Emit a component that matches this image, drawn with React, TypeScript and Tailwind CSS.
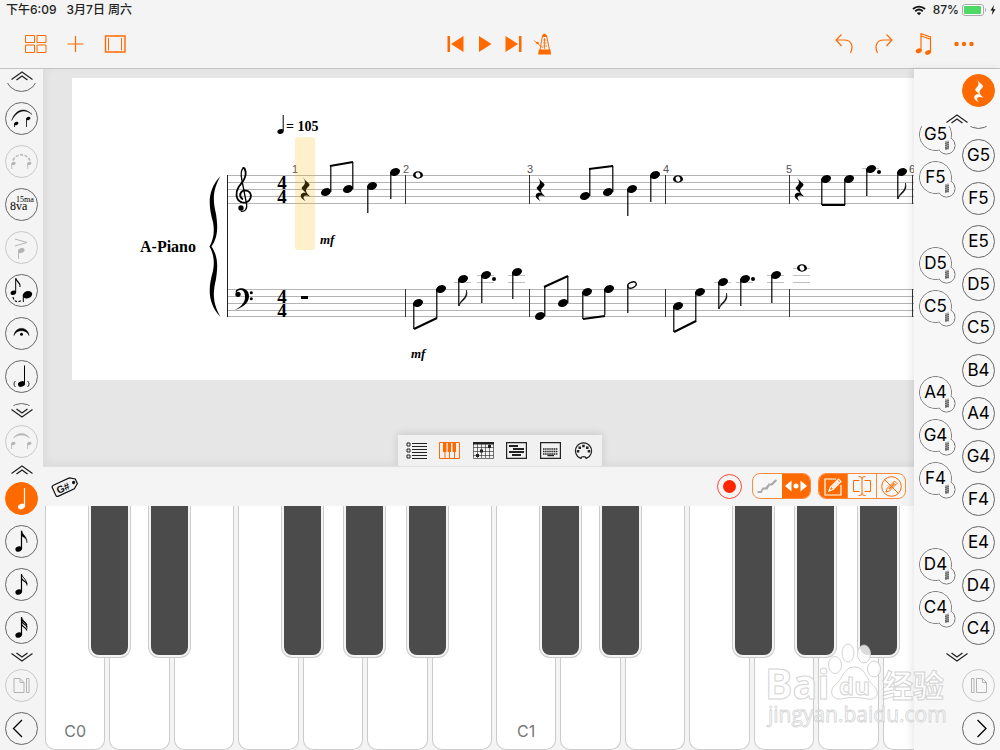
import type { ReactNode } from 'react';

const ORANGE = '#ff6a00';

interface NoteData {
    x: number;
    y: number;
    stem?: number;
    up?: boolean;
    flag?: boolean;
    dot?: [number, number];
    hollow?: boolean;
    ledgers?: number[];
}

const notes: NoteData[] = [
    // treble staff
    { x: 326, y: 192, stem: 166, up: true },
    { x: 348, y: 189, stem: 162, up: true },
    { x: 372, y: 186, stem: 213 },
    { x: 395, y: 172, stem: 199 },
    { x: 585, y: 196, stem: 169, up: true },
    { x: 608, y: 192, stem: 166, up: true },
    { x: 632, y: 189, stem: 216 },
    { x: 655, y: 175, stem: 202 },
    { x: 826, y: 179, stem: 205 },
    { x: 849, y: 179, stem: 205 },
    { x: 871, y: 169, stem: 196, dot: [879, 172], ledgers: [168] },
    { x: 902, y: 172, stem: 199, flag: true },
    // bass staff
    { x: 418, y: 303, stem: 329 },
    { x: 441, y: 289, stem: 318 },
    { x: 463, y: 279, stem: 306, flag: true, ledgers: [282] },
    { x: 486, y: 275, stem: 303, dot: [494, 279], ledgers: [275, 282] },
    { x: 517, y: 272, stem: 299, ledgers: [275, 282] },
    { x: 540, y: 316, stem: 287, up: true },
    { x: 563, y: 303, stem: 276, up: true },
    { x: 587, y: 292, stem: 319 },
    { x: 609, y: 289, stem: 315 },
    { x: 632, y: 285, stem: 313, hollow: true },
    { x: 678, y: 306, stem: 332 },
    { x: 700, y: 292, stem: 322 },
    { x: 723, y: 282, stem: 309, flag: true, ledgers: [282] },
    { x: 745, y: 279, stem: 306, dot: [753, 279], ledgers: [282] },
    { x: 776, y: 275, stem: 303, ledgers: [275, 282] },
];

const beams = [
    [330, 166, 353, 162], [589, 169, 613, 166], [822, 205, 845, 205],
    [414, 329, 437, 318], [544, 287, 568, 276], [583, 319, 605, 316], [674, 332, 696, 321],
];

const wholeNotes = [[418, 175], [678, 179], [802, 268]];

const REST = 'M-2-12C-1-9 4-6 4.500-4.500C5-3 1-1 1 1.500C1 4 4 6 5 7.500C1 5.500-1.500 6.500-1.500 8.500C-1.500 10 0 11 .5 12C-3 10-5 8-4 5.500C-3 3.500-.5 3.500 1 4C-1 2-3 0-3.500-1C-2-3 0-4.500 0-6.500C0-9-1.500-10.500-2-12Z';

const ScoreNote = ({ x, y, stem, up, flag, dot, hollow, ledgers }: NoteData) => {
    const sx = up ? x + 5 : x - 4;
    return (
        <g>
            {ledgers?.map(l => <rect key={l} x={x - 9} y={l} width="17" height="1" fill="#c0c0c0" />)}
            <ellipse
                cx={x} cy={y} rx={hollow ? 4.4 : 5.2} ry={hollow ? 2.8 : 3.7}
                transform={`rotate(-22 ${x} ${y})`}
                fill={hollow ? '#fff' : '#000'} stroke="#000" strokeWidth={hollow ? 1.3 : 0}
            />
            {stem && <path d={`M${sx - 0.2} ${y}V${stem}`} stroke="#000" strokeWidth="1.2" />}
            {flag && stem && (
                <path d={`M${sx} ${stem}C${sx + 1} ${stem - 7} ${sx + 8} ${stem - 7} ${sx + 7.5} ${stem - 16}C${sx + 10} ${stem - 7} ${sx + 2} ${stem - 6} ${sx} ${stem}Z`} stroke="#000" strokeWidth=".5" />
            )}
            {dot && <circle cx={dot[0]} cy={dot[1]} r="2" />}
        </g>
    );
};

const Brace = () => (
    <path d="M220.500 176C206 191 209 208 213 222C215 233 213 240 209.500 246.500C213 253 215 260 213 271C209 285 206 302 220.500 317C212 302 213 292 216 279C218 266 218 256 211.500 246.500C218 237 218 227 216 214C213 201 212 191 220.500 176Z" />
);

const TrebleClef = () => (
    <g transform="translate(130 110) scale(.3333)" fill="none" stroke="#000" strokeLinecap="round">
        <path d="M337 267C325 258 331 242 345 241C358 241 365 251 362 263C358 276 344 281 333 276" strokeWidth="5.500" />
        <path d="M333 276C318 269 315 249 326 231C336 217 349 206 347 188C346 179 343 174 340 174" strokeWidth="5.500" />
        <path d="M340 174C331 181 333 198 336 212L350 284C352 298 344 305 334 304" strokeWidth="4" />
        <circle cx="333" cy="294" r="8" fill="#000" stroke="none" />
    </g>
);

const BassClef = () => (
    <g transform="translate(130 110) scale(.3333)">
        <path d="M314 600C335 590 346 575 345 560C345 547 340 541 333 540C325 539 320 544 319 550C312 541 325 535 336 535C350 536 358 548 357 561C355 582 335 594 314 600Z" />
        <circle cx="324" cy="553" r="8" />
        <circle cx="364" cy="548" r="4.500" />
        <circle cx="364" cy="566" r="4.500" />
    </g>
);

const Score = () => (
    <svg width="842" height="302" viewBox="72 78 842 302" className="block shrink-0" role="img" aria-label="A-Piano score">
        {[175, 182, 189, 196, 203, 289, 296, 303, 310, 316].map(y => (
            <rect key={y} x="227" y={y} width="687" height="1" fill="#b4b4b4" />
        ))}
        <rect x="227" y="175" width="1" height="142" fill="#222" />
        {[405, 529, 665, 789, 912].map(x => (
            <g key={x} fill="#333">
                <rect x={x} y="175" width="1" height="29" />
                <rect x={x} y="289" width="1" height="28" />
            </g>
        ))}
        <Brace />
        <TrebleClef />
        <BassClef />
        <g fontFamily="'Liberation Serif', serif" fontWeight="bold">
            <text x="140" y="252" fontSize="16">A-Piano</text>
            <text x="286" y="131" fontSize="14">= 105</text>
            <g fontSize="19" textAnchor="middle">
                <text x="282" y="189">4</text>
                <text x="282" y="203">4</text>
                <text x="282" y="303">4</text>
                <text x="282" y="317">4</text>
            </g>
            <g fontSize="13" fontStyle="italic">
                <text x="320" y="244">mf</text>
                <text x="411" y="358">mf</text>
            </g>
        </g>
        <g fontFamily="'Liberation Sans', sans-serif" fontSize="11" fill="#555" textAnchor="middle">
            <text x="295" y="173">1</text>
            <text x="406" y="173">2</text>
            <text x="530" y="173">3</text>
            <text x="666" y="173">4</text>
            <text x="789" y="173">5</text>
            <text x="912" y="173">6</text>
        </g>
        <ellipse cx="280.500" cy="131.500" rx="3.200" ry="2.300" transform="rotate(-20 280.500 131.500)" />
        <path d="M283.200 131V115" stroke="#000" />
        <path d={REST} transform="translate(305 189)" />
        <path d={REST} transform="translate(540 189)" />
        <path d={REST} transform="translate(799 189)" />
        <rect x="301" y="296" width="7" height="3" />
        {wholeNotes.map(([x, y]) => (
            <g key={x}>
                {x === 802 && [268, 275, 282].map(l => <rect key={l} x="793" y={l} width="17" height="1" fill="#c0c0c0" />)}
                <ellipse cx={x} cy={y} rx="5" ry="3.700" />
                <ellipse cx={x} cy={y} rx="2.300" ry="2.700" transform={`rotate(-20 ${x} ${y})`} fill="#fff" />
            </g>
        ))}
        {notes.map(n => <ScoreNote key={`${n.x}-${n.y}`} {...n} />)}
        {beams.map(([x1, y1, x2, y2]) => (
            <path key={x1} d={`M${x1} ${y1}L${x2} ${y2}`} stroke="#000" strokeWidth="2" />
        ))}
        <rect x="295" y="137" width="20" height="113" rx="3" fill="#ffb400" fillOpacity=".2" />
    </svg>
);

const DoubleChevron = ({ down }: { down?: boolean }) => (
    <svg width="22" height="10" viewBox="0 0 22 10" fill="none" stroke="#222" className={down ? 'rotate-180' : ''}>
        <path d="M.5 8.500L11 1L21.500 8.500" strokeWidth="1.200" />
        <path d="M5.500 9L11 5L16.500 9" strokeWidth="1.400" />
    </svg>
);

interface RoundProps {
    label: string;
    dim?: boolean;
    active?: boolean;
    children?: ReactNode;
}

const RoundButton = ({ label, dim, active, children }: RoundProps) => (
    <button
        type="button"
        aria-label={label}
        className={`size-[33px] shrink-0 rounded-full border ${active ? 'border-[#ff6a00] bg-[#ff6a00] text-white' : dim ? 'border-[#c8c8c8] text-[#b4b4b4]' : 'border-[#666] text-black'}`}
    >
        <svg viewBox="0 0 33 33" className="-m-px size-[33px] max-w-none" fill="none" stroke="currentColor">{children}</svg>
    </button>
);

const Head = ({ x, y, r = 2.2 }: { x: number; y: number; r?: number }) => (
    <ellipse cx={x} cy={y} rx={r} ry={r * 0.75} transform={`rotate(-20 ${x} ${y})`} fill="currentColor" stroke="none" />
);

const FlagNote = ({ flags }: { flags: number }) => (
    <>
        <Head x={13.7} y={24} r={3.4} />
        <path d="M16.500 24V6" strokeWidth="1.200" />
        {flags === 1
            ? <path d="M16.700 5.500C17 10 22.500 11 22 18C22 13 18 12 16.700 11Z" fill="currentColor" strokeWidth=".4" />
            : <path d="M16.700 6.500C17.500 10 22 11 22 17.500" strokeWidth=".9" />}
        {flags > 1 && <path d="M16.700 10.500C17.500 13 20.500 13 22 16" strokeWidth="1.100" />}
        {flags > 2 && <path d="M16.700 8.500C17.500 11 20.500 11 22 14M16.700 13.500C17.500 16 20.500 16 22 19.500" strokeWidth="1.100" />}
    </>
);

const PageIcon = ({ flip }: { flip?: boolean }) => (
    flip ? (
        <path d="M9.500 9.500H12V23.500H9.500ZM14.500 9.500H20.500L24.500 13.500V23.500H14.500ZM20.500 9.500V13.500H24.500" />
    ) : (
        <path d="M9 9.500H15L19 13.500V23.500H9ZM15 9.500V13.500H19M21.500 9.500H24V23.500H21.500Z" />
    )
);

const LeftPalette = () => (
    <aside className="flex w-[43px] shrink-0 flex-col items-center bg-[#f4f4f4] pb-[5px]">
        <button type="button" aria-label="Previous marks" className="flex h-3.5 w-full shrink-0 items-center justify-center">
            <DoubleChevron />
        </button>
        <div className="min-h-0 flex-1 overflow-hidden">
            <div className="-mt-6 flex flex-col gap-2.5">
                <RoundButton label="Mark" />
                <RoundButton label="Slur">
                    <path d="M6.700 18.500C9 10 18 3 27 12.500C19 6 12 9 6.700 18.500Z" fill="currentColor" strokeWidth=".4" />
                    <Head x={11.3} y={21.5} />
                    <Head x={23.3} y={16.5} />
                    <path d="M9.500 21.500V25M21.500 16.500V25" strokeWidth=".8" />
                </RoundButton>
                <RoundButton label="Dashed slur" dim>
                    <path d="M8 15.500C11 8 22 8 25 15.500" strokeWidth="1.500" strokeDasharray="3 1.600" />
                    <Head x={8.5} y={18.5} />
                    <Head x={24.3} y={18.5} />
                    <path d="M6.800 18.500V24M22.700 18.500V24" strokeWidth=".8" />
                </RoundButton>
                <RoundButton label="Octave">
                    <g fontFamily="'Liberation Serif', serif" fill="currentColor" stroke="none">
                        <text x="5" y="22" fontSize="12">8va</text>
                        <text x="11" y="14" fontSize="8">15ma</text>
                    </g>
                </RoundButton>
                <RoundButton label="Accent" dim>
                    <path d="M10 8L22 11.500L10 15" />
                    <Head x={16.3} y={19.5} r={3.3} />
                    <path d="M13.500 20V28" />
                </RoundButton>
                <RoundButton label="Grace note">
                    <Head x={8.3} y={18.7} r={2.8} />
                    <path d="M10.700 18.500V5" />
                    <path d="M10.700 4C11 8 16 8 15 13" strokeWidth="1.200" />
                    <Head x={22.5} y={20.7} r={4.8} />
                    <path d="M18.300 21V28" />
                    <path d="M8 23C9 28 13 29 17 26" strokeDasharray="2.500 1.500" strokeWidth="1.200" />
                </RoundButton>
                <RoundButton label="Fermata">
                    <path d="M9 18.500C10 9 23 9 24 18.500C22 12 11 12 9 18.500Z" fill="currentColor" strokeWidth=".5" />
                    <circle cx="16.500" cy="17.300" r="1.500" fill="currentColor" stroke="none" />
                </RoundButton>
                <RoundButton label="Ghost note">
                    <Head x={16.5} y={24} r={3.6} />
                    <path d="M19.500 23.500V5.500" />
                    <path d="M10.500 21C8.500 23 8.500 25 10.500 27M22.500 21C24.500 23 24.500 25 22.500 27" strokeWidth=".9" />
                </RoundButton>
                <RoundButton label="Mark" />
            </div>
        </div>
        <button type="button" aria-label="More marks" className="flex h-[13px] w-full shrink-0 items-center justify-center">
            <DoubleChevron down />
        </button>
        <div className="mt-1.5 flex">
            <RoundButton label="Tie" dim>
                <path d="M8.500 13C12 7 21 7 24.500 13C20 9 13 9 8.500 13Z" fill="currentColor" strokeWidth=".5" />
                <Head x={8.3} y={18.5} />
                <Head x={24.3} y={18.5} />
                <path d="M6.500 18.500V24M22.500 18.500V24" strokeWidth=".8" />
            </RoundButton>
        </div>
        <button type="button" aria-label="Longer notes" className="flex h-6 w-full shrink-0 items-center justify-center">
            <DoubleChevron />
        </button>
        <div className="flex flex-col gap-2.5">
            <RoundButton label="Quarter note" active>
                <Head x={16.5} y={24.5} r={3.6} />
                <path d="M19.500 24V6" strokeWidth="1.200" />
            </RoundButton>
            <RoundButton label="Eighth note"><FlagNote flags={1} /></RoundButton>
            <RoundButton label="Sixteenth note"><FlagNote flags={2} /></RoundButton>
            <RoundButton label="Thirty-second note"><FlagNote flags={3} /></RoundButton>
        </div>
        <button type="button" aria-label="Shorter notes" className="flex h-[25px] w-full shrink-0 items-center justify-center">
            <DoubleChevron down />
        </button>
        <div className="flex flex-col gap-2.5">
            <RoundButton label="Previous page" dim><PageIcon /></RoundButton>
            <RoundButton label="Back"><path d="M17 8L8.500 16.500L17 25" strokeWidth="1.300" /></RoundButton>
        </div>
    </aside>
);

const naturals = ['', 'G5', 'F5', 'E5', 'D5', 'C5', 'B4', 'A4', 'G4', 'F4', 'E4', 'D4', 'C4'];
const sharps = ['G5', 'F5', '', 'D5', 'C5', '', 'A4', 'G4', 'F4', '', 'D4', 'C4'];

const SharpButton = ({ name }: { name: string }) => (
    <button type="button" aria-label={`${name} sharp`} className="relative size-[33px] shrink-0">
        <svg viewBox="0 0 38 38" className="absolute top-0 left-0 size-[38px] max-w-none" fill="#f7f7f7">
            <g stroke="#666">
                <circle cx="16.500" cy="16.500" r="16" />
                <circle cx="27.500" cy="27.500" r="8.500" />
            </g>
            <circle cx="16.500" cy="16.500" r="15.500" />
            <circle cx="27.500" cy="27.500" r="8" />
            <path d="M27 23V32M29 22.500V31.500M26 25.500L30 24.500M26 27.500L30 26.500M26 29.500L30 28.500M26 31L30 30" stroke="#444" strokeWidth=".8" />
        </svg>
        <span className="relative">{name}</span>
    </button>
);

const NotePalette = () => (
    <aside className="z-10 flex w-[86px] shrink-0 flex-col bg-[#f7f7f7] pt-[5px] pb-[5px] shadow-[-2px_0_8px_rgba(0,0,0,0.10)]">
        <div className="flex justify-end pr-[5px]">
            <RoundButton label="Rest" active>
                <path d={REST} transform="translate(16.500 16.500)" fill="currentColor" stroke="none" />
            </RoundButton>
        </div>
        <button type="button" aria-label="Higher notes" className="flex h-[19px] shrink-0 items-end justify-center pb-0.5">
            <DoubleChevron />
        </button>
        <div className="flex min-h-0 flex-1 justify-between overflow-hidden px-[5px] text-[17px]">
            <div className="-mt-2 flex flex-col gap-2.5">
                {sharps.map((name, i) => name ? <SharpButton key={i} name={name} /> : <div key={i} className="h-[33px] shrink-0" />)}
            </div>
            <div className="-mt-[30px] flex flex-col gap-2.5">
                {naturals.map(name => (
                    <button key={name} type="button" className="size-[33px] shrink-0 rounded-full border border-[#666]">
                        {name}
                    </button>
                ))}
            </div>
        </div>
        <button type="button" aria-label="Lower notes" className="flex h-6 shrink-0 items-center justify-center">
            <DoubleChevron down />
        </button>
        <div className="flex flex-col items-end gap-2.5 pr-[5px]">
            <RoundButton label="Next page" dim><PageIcon flip /></RoundButton>
            <RoundButton label="Forward"><path d="M15.500 8L24 16.500L15.500 25" strokeWidth="1.300" /></RoundButton>
        </div>
    </aside>
);

const ToolButton = ({ label, width, children }: { label: string; width: number; children: ReactNode }) => (
    <button type="button" aria-label={label}>
        <svg width={width} height="22" viewBox={`0 0 ${width} 22`} fill="none" stroke={ORANGE} className="block">{children}</svg>
    </button>
);

const Header = () => (
    <header className="shrink-0 border-b border-[#c4c4c4] bg-[#f4f4f4]">
        <div className="flex h-5 items-center justify-between pr-1 pl-1.5 text-[12px] font-medium text-[#222]">
            <div className="flex gap-2.5">
                <span>下午6:09</span>
                <span>3月7日 周六</span>
            </div>
            <div className="flex items-center gap-[3px]">
                <svg width="14" height="11" viewBox="0 0 14 11" fill="none" stroke="#111" strokeWidth="1.800" className="mr-1">
                    <path d="M1 4C4.500 .7 9.500 .7 13 4M3.200 6.300C5.500 4.200 8.500 4.200 10.800 6.300" />
                    <path d="M4.800 8C6 6.900 8 6.900 9.200 8L7 10.300Z" fill="#111" stroke="none" />
                </svg>
                <span>87%</span>
                <svg width="25" height="12" viewBox="0 0 25 12">
                    <rect x=".5" y=".5" width="21" height="11" rx="2.500" fill="#fff" stroke="#aaa" />
                    <rect x="2" y="2" width="17" height="8" rx="1" fill="#4cd964" />
                    <path d="M23 4C24.500 4.500 24.500 7.500 23 8Z" fill="#aaa" />
                </svg>
                <svg width="6" height="10" viewBox="0 0 6 10"><path d="M4 0L.5 5.500H2.700L1.800 10L5.500 4.200H3.200Z" fill="#111" /></svg>
            </div>
        </div>
        <nav className="flex h-12 items-center">
            <div className="flex flex-1 items-center gap-5 pl-[25px]">
                <ToolButton label="Library" width={22}>
                    <path d="M.5 2.500H9.500V9.500H.5ZM12 2.500H21V9.500H12ZM.5 12H9.500V19.500H.5ZM12 12H21V19.500H12Z" />
                </ToolButton>
                <ToolButton label="Add" width={17}><path d="M8.500 3V19M.5 11H16.500" strokeWidth="1.200" /></ToolButton>
                <ToolButton label="Layout" width={22}>
                    <path d="M1.500 3H21V19H1.500Z" strokeWidth="1.400" />
                    <path d="M4.500 5V17.500M17.500 5V17.500" />
                </ToolButton>
            </div>
            <div className="flex items-center gap-3 pr-0.5">
                <ToolButton label="Previous" width={17}>
                    <path d="M.5 3H3V19H.5ZM16.500 3V19L4 11Z" fill={ORANGE} stroke="none" />
                </ToolButton>
                <ToolButton label="Play" width={17}><path d="M3 3L15.500 11L3 19Z" fill={ORANGE} stroke="none" /></ToolButton>
                <ToolButton label="Next" width={17}>
                    <path d="M16.500 3H14V19H16.500ZM.5 3V19L13 11Z" fill={ORANGE} stroke="none" />
                </ToolButton>
                <ToolButton label="Metronome" width={17}>
                    <path d="M6 17L8.500 2.500H12.500L15.500 17" />
                    <path d="M5 16.500H16.500L17 21.500H4Z" fill={ORANGE} stroke="none" />
                    <path d="M8.500 2.500C8.500 0 12.500 0 12.500 2.500V4H8.500Z" fill={ORANGE} stroke="none" />
                    <path d="M0 7.500L9 15M10.500 5V16M9 7H12M9 10H12.500M8.500 13H13" strokeWidth=".8" />
                    <circle cx="3.500" cy="10" r="1.300" fill={ORANGE} stroke="none" />
                </ToolButton>
            </div>
            <div className="flex flex-1 items-center justify-end gap-[22px] pr-[26px]">
                <ToolButton label="Undo" width={18}>
                    <path d="M6.500 1.500L1 7L6.500 13M1 7H9C18 7 18 15 15.500 20" strokeWidth="1.200" />
                </ToolButton>
                <ToolButton label="Redo" width={18}>
                    <path d="M11.500 1.500L17 7L11.500 13M17 7H9C0 7 0 15 2.500 20" strokeWidth="1.200" />
                </ToolButton>
                <ToolButton label="Voices" width={17}>
                    <path d="M6 18V.7L15.500 4V19.500M6 3L15.500 6.300" strokeWidth="1.200" />
                    <ellipse cx="3.700" cy="17.800" rx="3" ry="2.300" transform="rotate(-25 3.700 17.800)" fill={ORANGE} stroke="none" />
                    <ellipse cx="13" cy="19.500" rx="3" ry="2.200" transform="rotate(-20 13 19.500)" fill={ORANGE} stroke="none" />
                </ToolButton>
                <ToolButton label="More" width={20}>
                    <g fill={ORANGE} stroke="none">
                        <circle cx="2.500" cy="11" r="2.200" />
                        <circle cx="10" cy="11" r="2.200" />
                        <circle cx="17.500" cy="11" r="2.200" />
                    </g>
                </ToolButton>
            </div>
        </nav>
    </header>
);

const views: { label: string; active?: boolean; icon: ReactNode }[] = [
    {
        label: 'Tracks',
        icon: <path d="M1 1H4V4H1ZM1 7H4V10H1ZM1 13H4V16H1ZM6 1.500H21M6 4.500H21M6 7.500H21M6 10.500H21M6 13.500H21M6 16.500H21" />,
    },
    {
        label: 'Keyboard',
        active: true,
        icon: (
            <>
                <path d="M.5 .5H20.500V16.500H.5ZM6 10V16.500M10.500 10V16.500M15.500 10V16.500" />
                <path d="M4 0H7.500V10H4ZM8.700 0H12V10H8.700ZM13.500 0H17V10H13.500Z" fill="currentColor" stroke="none" />
            </>
        ),
    },
    {
        label: 'Fretboard',
        icon: (
            <>
                <path d="M.5 1V16.500H20.500V1M4.500 2V16M8.500 2V16M12.500 2V16M16.500 2V16M.5 5.500H20.500M.5 9.500H20.500M.5 13.500H20.500" strokeWidth=".6" />
                <path d="M0 0H21V2.500H0ZM15 3H18V6H15ZM7 7.500H10V10.500H7ZM3 12H6V15H3Z" fill="currentColor" stroke="none" />
            </>
        ),
    },
    {
        label: 'Piano roll',
        icon: (
            <>
                <path d="M.6 .6H20.400V16.400H.6Z" strokeWidth="1.200" />
                <path d="M3 4H12M7 7H18M3 10H18M6 13H15" strokeWidth="2" />
            </>
        ),
    },
    {
        label: 'Typing',
        icon: (
            <>
                <path d="M.6 .6H20.400V16.400H.6Z" strokeWidth="1.200" />
                <path d="M3 7H18M3 9.500H18M3 12H18" strokeDasharray="1.500 .6" strokeWidth="1.600" />
                <path d="M7.500 13.500H14" strokeWidth="1.400" />
            </>
        ),
    },
    {
        label: 'MIDI',
        icon: (
            <>
                <path d="M8 16.500A8 8 0 1 1 13 16.500C13 14 8 14 8 16.500Z" strokeWidth="1.200" />
                <path d="M3.800 8H6.300V10.500H3.800ZM5.500 4.500H8V7H5.500ZM9.200 2.800H11.700V5.300H9.200ZM13 4.500H15.500V7H13ZM14.700 8H17.200V10.500H14.700Z" fill="currentColor" stroke="none" />
            </>
        ),
    },
];

const ViewTabs = () => (
    <div className="flex h-[31px] w-[204px] items-center justify-between bg-[#f1f1f1] px-2 shadow-[0_-1px_8px_rgba(0,0,0,0.14)]">
        {views.map(v => (
            <button key={v.label} type="button" aria-label={v.label} className={v.active ? 'text-[#ff6a00]' : 'text-[#222]'}>
                <svg width="21" height="17" viewBox="0 0 21 17" fill="none" stroke="currentColor" className="block">{v.icon}</svg>
            </button>
        ))}
    </div>
);

const KeyboardBar = () => (
    <div className="flex h-10 shrink-0 items-center justify-between border-t border-[#e0e0e0] bg-[#f4f4f4] pr-2 pb-px pl-2">
        <button type="button" aria-label="Key labels">
            <svg width="28" height="25" viewBox="0 0 28 25" fill="none" stroke="#111" strokeWidth="1.200">
                <g transform="rotate(-25 14 12.500)">
                    <path d="M4 6.500H21.500L26.500 10V15L21.500 18.500H4C2.500 18.500 2 18 2 16.500V8.500C2 7 2.500 6.500 4 6.500Z" />
                    <circle cx="23.500" cy="12.500" r="1.600" fill="#111" stroke="none" />
                    <text x="5" y="16.500" fontSize="10" fontWeight="bold" fill="#111" stroke="none" fontFamily="'Liberation Sans', sans-serif">G#</text>
                </g>
            </svg>
        </button>
        <div className="flex items-center text-[#ff6a00]">
            <button type="button" aria-label="Record" className="mr-2.5 flex size-[25px] items-center justify-center rounded-full border border-[#ff4433]">
                <span className="size-[13px] rounded-full bg-[#ff2600]" />
            </button>
            <div className="mr-[7px] flex h-[26px] w-[59px] overflow-hidden rounded-lg border border-[#ff8a3c] bg-[#f7f7f7]">
                <button type="button" aria-label="Glide" className="flex flex-1 items-center justify-center">
                    <svg width="20" height="15" viewBox="0 0 20 15" fill="none" stroke="#aaa" strokeWidth="1.800">
                        <path d="M.5 13H4L6 9.500H10L12 5.500H15L19.500 1M3 13.500L7 9M8 10L12.500 5M14 6L18 2" />
                    </svg>
                </button>
                <button type="button" aria-label="Scroll" className="flex flex-1 items-center justify-center bg-[#ff6a00]">
                    <svg width="22" height="12" viewBox="0 0 22 12" fill="#fff">
                        <path d="M6.500 .5V11.500L0 6ZM15.500 .5V11.500L22 6Z" />
                        <circle cx="11" cy="6" r="2.500" />
                    </svg>
                </button>
            </div>
            <div className="flex h-[26px] w-[88px] divide-x divide-[#ff8a3c] overflow-hidden rounded-lg border border-[#ff8a3c] bg-[#f7f7f7]">
                <button type="button" aria-label="Edit" className="flex flex-1 items-center justify-center bg-[#ff6a00]">
                    <svg width="19" height="19" viewBox="0 0 19 19" fill="none" stroke="#fff" strokeWidth="1.200">
                        <path d="M12 2H1V18H17V8" />
                        <path d="M5 14L6.500 10L14.500 2L17 4.500L9 12.500ZM13 3.500L15.500 6" fill="#ff6a00" />
                        <path d="M8 11L14 5" strokeWidth="1.800" />
                    </svg>
                </button>
                <button type="button" aria-label="Insert" className="flex flex-1 items-center justify-center">
                    <svg width="20" height="20" viewBox="0 0 20 20" fill="none" stroke="currentColor">
                        <path d="M7.500 4.500H1.500V15.500H7.500M12.500 4.500H18.500V15.500H12.500M10 2V18M6.500 .5C8.500 .5 10 1 10 2.500C10 1 11.500 .5 13.500 .5M6.500 19.500C8.500 19.500 10 19 10 17.500C10 19 11.500 19.500 13.500 19.500" />
                    </svg>
                </button>
                <button type="button" aria-label="Read only" className="flex flex-1 items-center justify-center">
                    <svg width="21" height="21" viewBox="0 0 21 21" fill="none" stroke="currentColor">
                        <circle cx="10.500" cy="10.500" r="9.800" />
                        <path d="M3.500 3.500L17.500 17.500M5 16L6 12.500L13.500 5L16 7.500L8.500 15ZM12 6.500L14.500 9" />
                        <path d="M8 13L13 8" strokeWidth="1.500" />
                    </svg>
                </button>
            </div>
        </div>
    </div>
);

const BlackKey = ({ name, place }: { name: string; place: string }) => (
    <button
        type="button"
        aria-label={name}
        className={`absolute top-0 h-[149px] w-[37px] rounded-b-lg bg-[#4b4b4b] shadow-[0_0_0_2px_#f4f4f4,0_0_0_3px_#ccc] ${place}`}
    />
);

const Octave = ({ label }: { label: string }) => (
    <div className="relative flex w-[447px] shrink-0 gap-1">
        {['C', 'D', 'E', 'F', 'G', 'A', 'B'].map(k => (
            <button key={k} type="button" aria-label={k} className="flex flex-1 items-end justify-center rounded-b-[10px] border border-t-0 border-[#ccc] bg-white pb-1.5 text-[16px] text-[#777]">
                {k === 'C' && label}
            </button>
        ))}
        <BlackKey name="C#" place="left-[46px]" />
        <BlackKey name="D#" place="left-[106px]" />
        <BlackKey name="F#" place="left-[239px]" />
        <BlackKey name="G#" place="left-[301px]" />
        <BlackKey name="A#" place="left-[364px]" />
    </div>
);

const Watermark = () => (
    <svg width="190" height="90" viewBox="760 640 190 90" className="pointer-events-none absolute right-[50px] bottom-5 z-20" fill="#fff" fillOpacity=".8" stroke="#c8c8c8" strokeOpacity=".8">
        <text x="765" y="699" fontSize="41" fontWeight="bold" fontFamily="'Open Sans', sans-serif">Bai</text>
        <ellipse cx="835" cy="665" rx="6.500" ry="8.500" />
        <ellipse cx="848" cy="653" rx="6" ry="9" />
        <ellipse cx="864" cy="654" rx="6.500" ry="9" />
        <ellipse cx="874" cy="669" rx="6.500" ry="8" />
        <path d="M854 667C866 667 866 680 874 686C881 694 876 700 868 699C858 697 850 697 841 699C832 700 829 692 834 686C843 680 843 667 854 667Z" />
        <text x="839" y="695" fontSize="24" fontWeight="bold" fontFamily="'Open Sans', sans-serif">du</text>
        <text x="882" y="697" fontSize="31" fontWeight="bold" fontFamily="'Noto Sans CJK SC', sans-serif">经验</text>
        <text x="768" y="722" fontSize="21" strokeWidth=".8" fontFamily="'Open Sans', sans-serif">jingyan.baidu.com</text>
    </svg>
);

export default function App() {
    return (
        <div className="relative flex h-screen flex-col overflow-hidden bg-[#f4f4f4] font-['Inter','Noto_Sans_CJK_SC',sans-serif] text-black">
            <Header />
            <div className="flex min-h-0 flex-1">
                <LeftPalette />
                <main className="flex min-w-0 flex-1 flex-col">
                    <section className="flex min-h-0 flex-1 flex-col justify-between overflow-hidden bg-[#e6e6e6] pt-[9px] shadow-[inset_3px_-3px_8px_rgba(0,0,0,0.05)]">
                        <div className="ml-[29px] overflow-hidden bg-white">
                            <Score />
                        </div>
                        <div className="flex justify-center pl-[43px]">
                            <ViewTabs />
                        </div>
                    </section>
                    <KeyboardBar />
                    <section className="flex h-[244px] shrink-0 gap-1 overflow-hidden bg-[#f4f4f4] pl-0.5">
                        <Octave label="C0" />
                        <Octave label="C1" />
                    </section>
                </main>
                <NotePalette />
            </div>
            <Watermark />
        </div>
    );
}
